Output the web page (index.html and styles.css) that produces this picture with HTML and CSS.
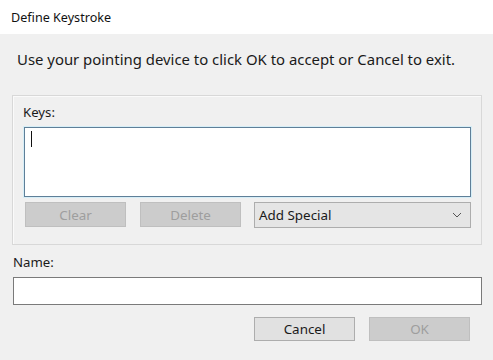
FILE: index.html
```html
<!DOCTYPE html>
<html lang="en">
<head>
    <meta charset="UTF-8">
    <title>Define Keystroke</title>
    <link rel="stylesheet" href="styles.css">
</head>
<body>
    <div class="dialog">
        <div class="title-bar">Define Keystroke</div>
        <div class="content">
            <p class="hint">Use your pointing device to click OK to accept or Cancel to exit.</p>

            <div class="group">
                <div class="label">Keys:</div>
                <div class="keys-box"><span class="caret"></span></div>
                <div class="key-actions">
                    <button class="btn" disabled>Clear</button>
                    <button class="btn" disabled>Delete</button>
                    <div class="select">
                        <span>Add Special</span>
                        <svg width="10" height="6" viewBox="0 0 10 6"><path d="M1 1 L5 5 L9 1" fill="none" stroke="#555" stroke-width="1"/></svg>
                    </div>
                </div>
            </div>

            <div class="label name-label">Name:</div>
            <div class="name-input"></div>

            <div class="footer">
                <button class="btn btn-normal">Cancel</button>
                <button class="btn" disabled>OK</button>
            </div>
        </div>
    </div>
</body>
</html>
```

FILE: styles.css
```css
body {
    margin: 0;
    font-family: "Noto Sans", "Open Sans", sans-serif;
    font-size: 13px;
    color: #1a1a1a;
    background: #fff;
}

.dialog {
    width: 493px;
    height: 360px;
    background: #f0f0f0;
}

.title-bar {
    height: 34px;
    line-height: 36px;
    padding-left: 11px;
    background: #fff;
    font-size: 12.6px;
    color: #111;
}

.content {
    padding: 0 11px 0 13px;
}

.hint {
    margin: 0;
    padding: 15px 0 0 4px;
    height: 46px;
    line-height: 20px;
    font-size: 14.9px;
}

/* Groupe Keys */
.group {
    margin-left: -1px;
    border: 1px solid #d8d8d8;
    box-shadow: inset 1px 1px 0 #fafafa;
    padding: 0 10px;
    box-sizing: border-box;
    width: 470px;
    height: 150px;
}

.label {
    font-size: 13.2px;
    line-height: 18px;
    color: #1a1a1a;
}

.group .label {
    padding-top: 7px;
    height: 24px;
}

.keys-box {
    height: 70px;
    margin-left: 1px;
    background: #fff;
    border: 1px solid #5f7f98;
    box-shadow: 0 0 0 1px #d6eef7;
    box-sizing: border-box;
    padding: 3px 6px;
}

.caret {
    display: block;
    width: 1px;
    height: 16px;
    background: #111;
}

.key-actions {
    display: flex;
    gap: 14px;
    margin-top: 5px;
    padding-left: 2px;
}

.btn {
    width: 101px;
    height: 25px;
    font-family: inherit;
    font-size: 13.4px;
    border: 1px solid #bfbfbf;
    background: #cccccc;
    color: #9e9e9e;
    padding: 0;
}

.btn-normal {
    background: #e1e1e1;
    border-color: #adadad;
    color: #1a1a1a;
}

.select {
    flex: 1;
    margin-left: -1px;
    height: 26px;
    box-sizing: border-box;
    border: 1px solid #adadad;
    background: #e5e5e5;
    display: flex;
    align-items: center;
    justify-content: space-between;
    padding: 0 8px 0 4px;
    font-size: 13.4px;
    color: #1a1a1a;
}

.name-label {
    margin-top: 8px;
    height: 24px;
    line-height: 18px;
}

.name-input {
    width: 469px;
    height: 28px;
    box-sizing: border-box;
    background: #fff;
    border: 1px solid #7a7a7a;
}

.footer {
    display: flex;
    justify-content: flex-end;
    gap: 14px;
    margin-top: 12px;
    padding-right: 12px;
}

.footer .btn {
    height: 24px;
}
```
